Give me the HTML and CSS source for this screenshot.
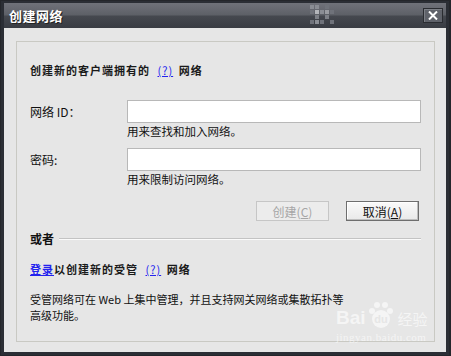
FILE: index.html
```html
<!DOCTYPE html>
<html lang="zh-CN">
<head>
  <meta charset="UTF-8" />
  <title>创建网络</title>
  <link rel="stylesheet" href="styles.css">
</head>
<body>

  <div class="window">
    <!-- Title bar -->
    <div class="titlebar">
      <span class="title">创建网络</span>
      <svg class="dots" width="26" height="20" viewBox="0 0 26 20">
        <rect x="0" y="0" width="4" height="4" fill="#8a8d94"/>
        <rect x="5" y="0" width="4" height="4" fill="#8a8d94"/>
        <rect x="15" y="0" width="4" height="4" fill="#6f727a"/>
        <rect x="0" y="5" width="4" height="4" fill="#6f727a"/>
        <rect x="5" y="5" width="4" height="4" fill="#b4b6bb"/>
        <rect x="10" y="5" width="4" height="4" fill="#8a8d94"/>
        <rect x="15" y="5" width="4" height="4" fill="#9a9ca2"/>
        <rect x="20" y="5" width="4" height="4" fill="#6f727a"/>
        <rect x="5" y="10" width="4" height="4" fill="#7d8087"/>
        <rect x="15" y="10" width="4" height="4" fill="#7d8087"/>
        <rect x="0" y="15" width="4" height="4" fill="#6f727a"/>
        <rect x="5" y="15" width="4" height="4" fill="#8a8d94"/>
        <rect x="10" y="15" width="4" height="4" fill="#6f727a"/>
        <rect x="20" y="15" width="4" height="4" fill="#6f727a"/>
      </svg>
      <div class="close-btn">
        <svg width="10" height="9" viewBox="0 0 10 9">
          <path d="M1 0.5 L9 8.5 M9 0.5 L1 8.5" stroke="#fff" stroke-width="2"/>
        </svg>
      </div>
    </div>

    <!-- Content -->
    <div class="content">
      <div class="panel">
        <p class="intro">创建新的客户端拥有的 <a href="#">(?)</a> 网络</p>

        <div class="field">
          <label>网络 ID：</label>
          <input type="text" />
        </div>
        <div class="hint">用来查找和加入网络。</div>

        <div class="field second">
          <label>密码:</label>
          <input type="password" />
        </div>
        <div class="hint">用来限制访问网络。</div>

        <div class="actions">
          <button class="btn disabled">创建(<u>C</u>)</button>
          <button class="btn">取消(<u>A</u>)</button>
        </div>

        <div class="divider">
          <span>或者</span>
          <div class="rule"></div>
        </div>

        <p class="intro login"><a class="strong" href="#">登录</a>以创建新的受管 <a href="#">(?)</a> 网络</p>

        <p class="note">受管网络可在 Web 上集中管理，并且支持网关网络或集散拓扑等<br>高级功能。</p>
      </div>
    </div>

    <!-- Watermark -->
    <div class="watermark">
      <div class="wm-logo">
        <span class="wm-bai">Bai</span>
        <svg width="30" height="28" viewBox="0 0 30 28">
          <circle cx="15" cy="18" r="9" fill="#fff"/>
          <circle cx="6" cy="10" r="3" fill="#fff"/>
          <circle cx="11" cy="4" r="3" fill="#fff"/>
          <circle cx="19" cy="4" r="3" fill="#fff"/>
          <circle cx="24" cy="10" r="3" fill="#fff"/>
          <text x="15" y="22" font-size="11" font-weight="bold" fill="#e6e6e6" text-anchor="middle" font-family="Liberation Sans, sans-serif">du</text>
        </svg>
        <span class="wm-jy">经验</span>
      </div>
      <div class="wm-url">jingyan.baidu.com</div>
    </div>
  </div>

</body>
</html>
```

FILE: styles.css
```css
* {
  box-sizing: border-box;
}

body {
  margin: 0;
  background: #24262b;
  font-family: "Noto Sans CJK SC", "Liberation Sans", sans-serif;
  color: #111;
}

.window {
  position: relative;
  width: 448px;
  height: 354px;
  margin: 1px 0 0 1px;
  border: 3px solid #2b2e35;
  border-top-width: 2px;
  background: #e6e6e6;
  display: flex;
  flex-direction: column;
}

/* Title bar */
.titlebar {
  height: 25px;
  display: flex;
  align-items: center;
  padding: 0 3px 0 5px;
  background: linear-gradient(#70727a, #5d6067 48%, #45484f 52%, #393c43);
  position: relative;
}

.title {
  color: #fff;
  font-weight: bold;
  font-size: 13px;
  letter-spacing: 0.5px;
  text-shadow: 1px 1px 0 #222;
}

.dots {
  position: absolute;
  left: 306px;
  top: 2px;
}

.close-btn {
  margin-left: auto;
  width: 20px;
  height: 15px;
  border: 1px solid #2a2c31;
  background: #5f626a;
  box-shadow: inset 1px 1px 0 #7c7f86;
  display: flex;
  align-items: center;
  justify-content: center;
}

/* Content */
.content {
  flex: 1;
  padding: 13px 11px 10px 12px;
}

.panel {
  height: 100%;
  border: 1px solid #c9c9c3;
  padding: 20px 13px 0 13px;
}

p {
  margin: 0;
}

.intro {
  font-size: 11px;
  line-height: 16px;
  letter-spacing: 1px;
  font-weight: bold;
  color: #1a1a1a;
}

a {
  color: #2222ee;
  text-decoration: underline;
  font-weight: normal;
  margin: 0 2px 0 4px;
}

a.strong {
  font-weight: bold;
  margin: 0;
}

.field {
  display: flex;
  align-items: center;
  margin-top: 22px;
}

.field.second {
  margin-top: 9px;
}

.field label {
  width: 97px;
  font-size: 12px;
}

.field input {
  width: 294px;
  height: 23px;
  border: 1px solid #b8b8b8;
  background: #fff;
  outline: none;
}

.hint {
  margin-left: 97px;
  font-size: 11.5px;
  line-height: 16px;
}

.actions {
  display: flex;
  justify-content: flex-end;
  gap: 17px;
  margin-top: 14px;
  padding-right: 2px;
}

.btn {
  width: 73px;
  height: 20px;
  padding: 0;
  font-family: inherit;
  font-size: 12px;
  color: #111;
  border: 1px solid #6e6e6e;
  background: linear-gradient(#fafafa, #e9e9e9);
  box-shadow: inset -1px -1px 0 #bdbdbd, inset 1px 1px 0 #fff;
}

.btn.disabled {
  color: #a6a6a6;
  border-color: #c6c6c6;
  background: #ececec;
  box-shadow: none;
}

.divider {
  display: flex;
  align-items: center;
  margin-top: 10px;
  line-height: 16px;
}

.divider span {
  font-size: 12px;
  font-weight: bold;
}

.rule {
  flex: 1;
  margin-left: 5px;
  border-top: 1px solid #c3c3c3;
  border-bottom: 1px solid #fafafa;
}

.login {
  margin-top: 14px;
}

.note {
  margin-top: 14px;
  font-size: 11px;
  line-height: 16px;
}

/* Watermark */
.watermark {
  position: absolute;
  left: 332px;
  top: 298px;
  opacity: 0.6;
  color: #fff;
}

.wm-logo {
  display: flex;
  align-items: flex-end;
}

.wm-bai {
  font-family: "Liberation Sans", sans-serif;
  font-weight: bold;
  font-size: 19px;
  line-height: 22px;
}

.wm-jy {
  font-size: 15px;
  line-height: 20px;
  margin-left: 2px;
}

.wm-url {
  font-family: "Liberation Serif", serif;
  font-size: 11px;
  margin-top: 2px;
  letter-spacing: 0.5px;
}
```
